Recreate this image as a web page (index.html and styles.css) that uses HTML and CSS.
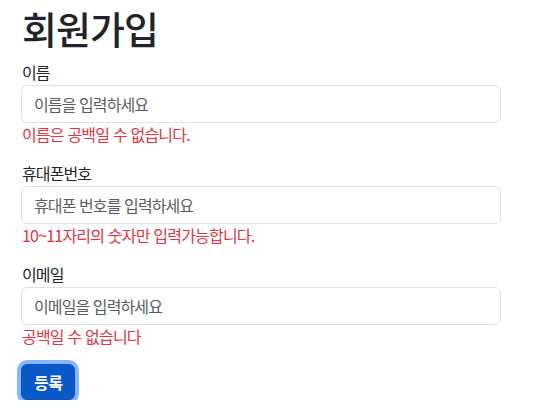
FILE: index.html
```html
<!DOCTYPE html>
<html lang="ko">
<head>
<meta charset="utf-8">
<title>회원가입</title>
<link rel="stylesheet" href="styles.css">
</head>
<body>
<main class="page">
  <h1 class="title">회원가입</h1>
  <form class="form">
    <div class="group">
      <label class="label" for="name">이름</label>
      <input class="input" id="name" type="text" placeholder="이름을 입력하세요">
      <div class="feedback">이름은 공백일 수 없습니다.</div>
    </div>
    <div class="group">
      <label class="label" for="phone">휴대폰번호</label>
      <input class="input" id="phone" type="text" placeholder="휴대폰 번호를 입력하세요">
      <div class="feedback">10~11자리의 숫자만 입력가능합니다.</div>
    </div>
    <div class="group">
      <label class="label" for="email">이메일</label>
      <input class="input" id="email" type="text" placeholder="이메일을 입력하세요">
      <div class="feedback">공백일 수 없습니다</div>
    </div>
    <button class="btn" type="button">등록</button>
  </form>
</main>
</body>
</html>
```
FILE: styles.css
```css
* { box-sizing: border-box; }
html, body { margin: 0; padding: 0; background: #fff; }
body {
  font-family: "Noto Sans CJK KR", "Noto Sans", sans-serif;
  color: #212529;
  font-size: 16px;
}
.page {
  width: 501px;
  padding-left: 21px;
}
.title {
  margin: 4px 0 9px;
  font-size: 38px;
  line-height: 48px;
  font-weight: 500;
  letter-spacing: -1px;
  padding-left: 1px;
}
.form { display: flex; flex-direction: column; align-items: flex-start; }
.group {
  display: flex;
  flex-direction: column;
  width: 100%;
  margin-bottom: 18px;
}
.label {
  display: block;
  line-height: 22px;
  margin-bottom: 2px;
  letter-spacing: -0.9px;
  padding-left: 1px;
}
.input {
  display: block;
  width: 100%;
  height: 38px;
  padding: 0 12px;
  font-family: inherit;
  font-size: 16px;
  letter-spacing: -0.9px;
  color: #212529;
  background: #fff;
  border: 1px solid #dee2e6;
  border-radius: 6px;
  outline: none;
}
.input::placeholder { color: #595c5f; opacity: 1; }
.feedback {
  margin-top: 1px;
  line-height: 20px;
  color: #dc3545;
  letter-spacing: -0.8px;
  padding-left: 1px;
}
.btn {
  height: 36px;
  padding: 0 12px;
  font-family: inherit;
  font-size: 16px;
  font-weight: 700;
  letter-spacing: -0.5px;
  color: #fff;
  background: #0a58ca;
  border: 1px solid #0a53be;
  border-radius: 6px;
  box-shadow: 0 0 0 4px #86b7fe;
}
```
